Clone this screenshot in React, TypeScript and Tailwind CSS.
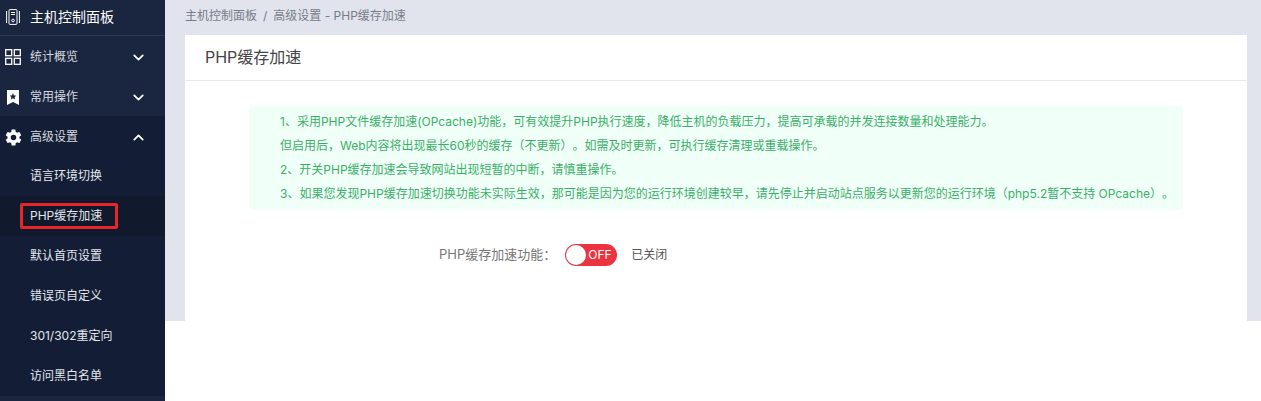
import { ChevronDown, ChevronUp } from "lucide-react";
import type { ReactNode } from "react";

const font = "font-['Inter','Noto_Sans_CJK_SC',sans-serif]";

const subItems = [
  "语言环境切换",
  "PHP缓存加速",
  "默认首页设置",
  "错误页自定义",
  "301/302重定向",
  "访问黑白名单",
];

const notes = [
  "1、采用PHP文件缓存加速(OPcache)功能，可有效提升PHP执行速度，降低主机的负载压力，提高可承载的并发连接数量和处理能力。",
  "但启用后，Web内容将出现最长60秒的缓存（不更新）。如需及时更新，可执行缓存清理或重载操作。",
  "2、开关PHP缓存加速会导致网站出现短暂的中断，请慎重操作。",
  "3、如果您发现PHP缓存加速切换功能未实际生效，那可能是因为您的运行环境创建较早，请先停止并启动站点服务以更新您的运行环境（php5.2暂不支持 OPcache）。",
];

const GridIcon = () => (
  <svg width="16" height="16" viewBox="0 0 16 16" fill="none" stroke="white" strokeWidth="1.3">
    <rect x="0.7" y="0.7" width="6" height="6" />
    <rect x="9.3" y="0.7" width="6" height="6" />
    <rect x="0.7" y="9.3" width="6" height="6" />
    <rect x="9.3" y="9.3" width="6" height="6" />
  </svg>
);

const BookmarkIcon = () => (
  <svg width="12" height="15" viewBox="0 0 12 15">
    <path d="M0 0H12V15L6 12L0 15Z" fill="white" />
    <path d="M6 3L7 5.4L9.4 5.6L7.6 7.2L8.1 9.6L6 8.3L3.9 9.6L4.4 7.2L2.6 5.6L5 5.4Z" fill="#1a2540" />
  </svg>
);

const GearIcon = () => (
  <svg width="19" height="19" viewBox="0 0 24 24" fill="white">
    <path
      fillRule="evenodd"
      d="M19.4 13c.04-.33.1-.66.1-1s-.06-.67-.1-1l2.1-1.65c.2-.15.25-.42.12-.64l-2-3.46c-.12-.22-.39-.3-.61-.22l-2.49 1c-.52-.4-1.08-.73-1.69-.98l-.38-2.65A.49.49 0 0 0 14 2h-4c-.25 0-.46.18-.49.42l-.38 2.65c-.61.25-1.17.59-1.69.98l-2.49-1c-.23-.09-.49 0-.61.22l-2 3.46c-.13.22-.07.49.12.64L4.57 11c-.04.33-.07.66-.07 1s.03.67.07 1l-2.11 1.65c-.19.15-.25.42-.12.64l2 3.46c.12.22.39.3.61.22l2.49-1c.52.4 1.08.73 1.69.98l.38 2.65c.03.24.24.42.49.42h4c.25 0 .46-.18.49-.42l.38-2.65c.61-.25 1.17-.59 1.69-.98l2.49 1c.23.09.49 0 .61-.22l2-3.46c.12-.22.07-.49-.12-.64L19.4 13ZM12 15.5a3.5 3.5 0 1 1 0-7 3.5 3.5 0 0 1 0 7Z"
    />
  </svg>
);

const ServerIcon = () => (
  <svg width="14" height="16" viewBox="0 0 14 16" fill="none" stroke="white" strokeWidth="1">
    <rect x="3" y="0.6" width="8" height="14.8" rx="1" />
    <path d="M0.6 2V14M13.4 2V14M5 3.5H9M5 5.5H9" />
    <circle cx="7" cy="11.5" r="1.3" />
  </svg>
);

const MenuRow = ({ icon, label, open }: { icon: ReactNode; label: string; open?: boolean }) => (
  <div className={`flex h-10 items-center pr-[18px] pt-[2px] ${open ? "bg-[#131e36]" : ""}`}>
    <span className="flex w-[26px] shrink-0 items-center justify-center">{icon}</span>
    <span className="ml-[4px] flex-1 text-xs text-[#d5d8df]">{label}</span>
    {open ? (
      <ChevronUp size={17} strokeWidth={2.4} color="white" />
    ) : (
      <ChevronDown size={17} strokeWidth={2.4} color="white" />
    )}
  </div>
);

export default function App() {
  return (
    <div className={`flex h-[401px] items-start overflow-hidden bg-white [text-spacing-trim:space-all] ${font}`}>
      <aside className="h-[401px] w-[165px] shrink-0 bg-[#1a2540]">
        <div className="flex h-[36px] items-center gap-[10px] border-b border-[#2c3752] pb-[2px] pl-[6px] text-sm text-white">
          <ServerIcon />
          <span>主机控制面板</span>
        </div>
        <MenuRow icon={<GridIcon />} label="统计概览" />
        <MenuRow icon={<BookmarkIcon />} label="常用操作" />
        <MenuRow icon={<GearIcon />} label="高级设置" open />
        <div className="bg-[#131e36]">
          {subItems.map((item, i) => (
            <div
              key={item}
              className={`relative flex h-10 items-center pl-[30px] text-xs text-[#e4e6eb] ${i === 1 ? "bg-[#111a2c]" : ""}`}
            >
              {item}
              {i === 1 && (
                <span className="absolute left-[20px] top-[7px] h-[26px] w-[98px] rounded-[2px] border-[3px] border-[#e8262a]" />
              )}
            </div>
          ))}
        </div>
      </aside>

      <main className="h-[321px] flex-1 overflow-hidden bg-[#e1e4ec] pl-[20px] pr-[14px]">
        <div className="flex h-[31px] items-center gap-[6px] text-xs text-[#777c88]">
          <span>主机控制面板</span>
          <span>/</span>
          <span>高级设置 - PHP缓存加速</span>
        </div>
        <section className="mt-[4px] h-[400px] bg-white">
          <h1 className="flex h-[46px] items-center border-b border-[#e6e8ee] pb-[2px] pl-[20px] text-base font-normal text-[#444]">
            PHP缓存加速
          </h1>
          <div className="ml-[64px] mt-[25px] h-[104px] w-[934px] rounded-[4px] bg-[#f0fff7] pl-[31px] pt-[4px] text-xs leading-[24px] text-[#3aaf68]">
            {notes.map(note => (
              <p key={note} className="whitespace-nowrap">
                {note}
              </p>
            ))}
          </div>
          <div className="mt-[34px] flex items-center pl-[254px]">
            <span className="text-[13px] text-[#777]">PHP缓存加速功能：</span>
            <span className="ml-[9px] flex h-[22px] w-[52px] items-center rounded-full bg-[#ec3340]">
              <span className="ml-[1px] h-[20px] w-[20px] rounded-full bg-white" />
              <span className="ml-[2px] text-xs text-white">OFF</span>
            </span>
            <span className="ml-[14px] text-xs text-[#555]">已关闭</span>
          </div>
        </section>
      </main>
    </div>
  );
}
